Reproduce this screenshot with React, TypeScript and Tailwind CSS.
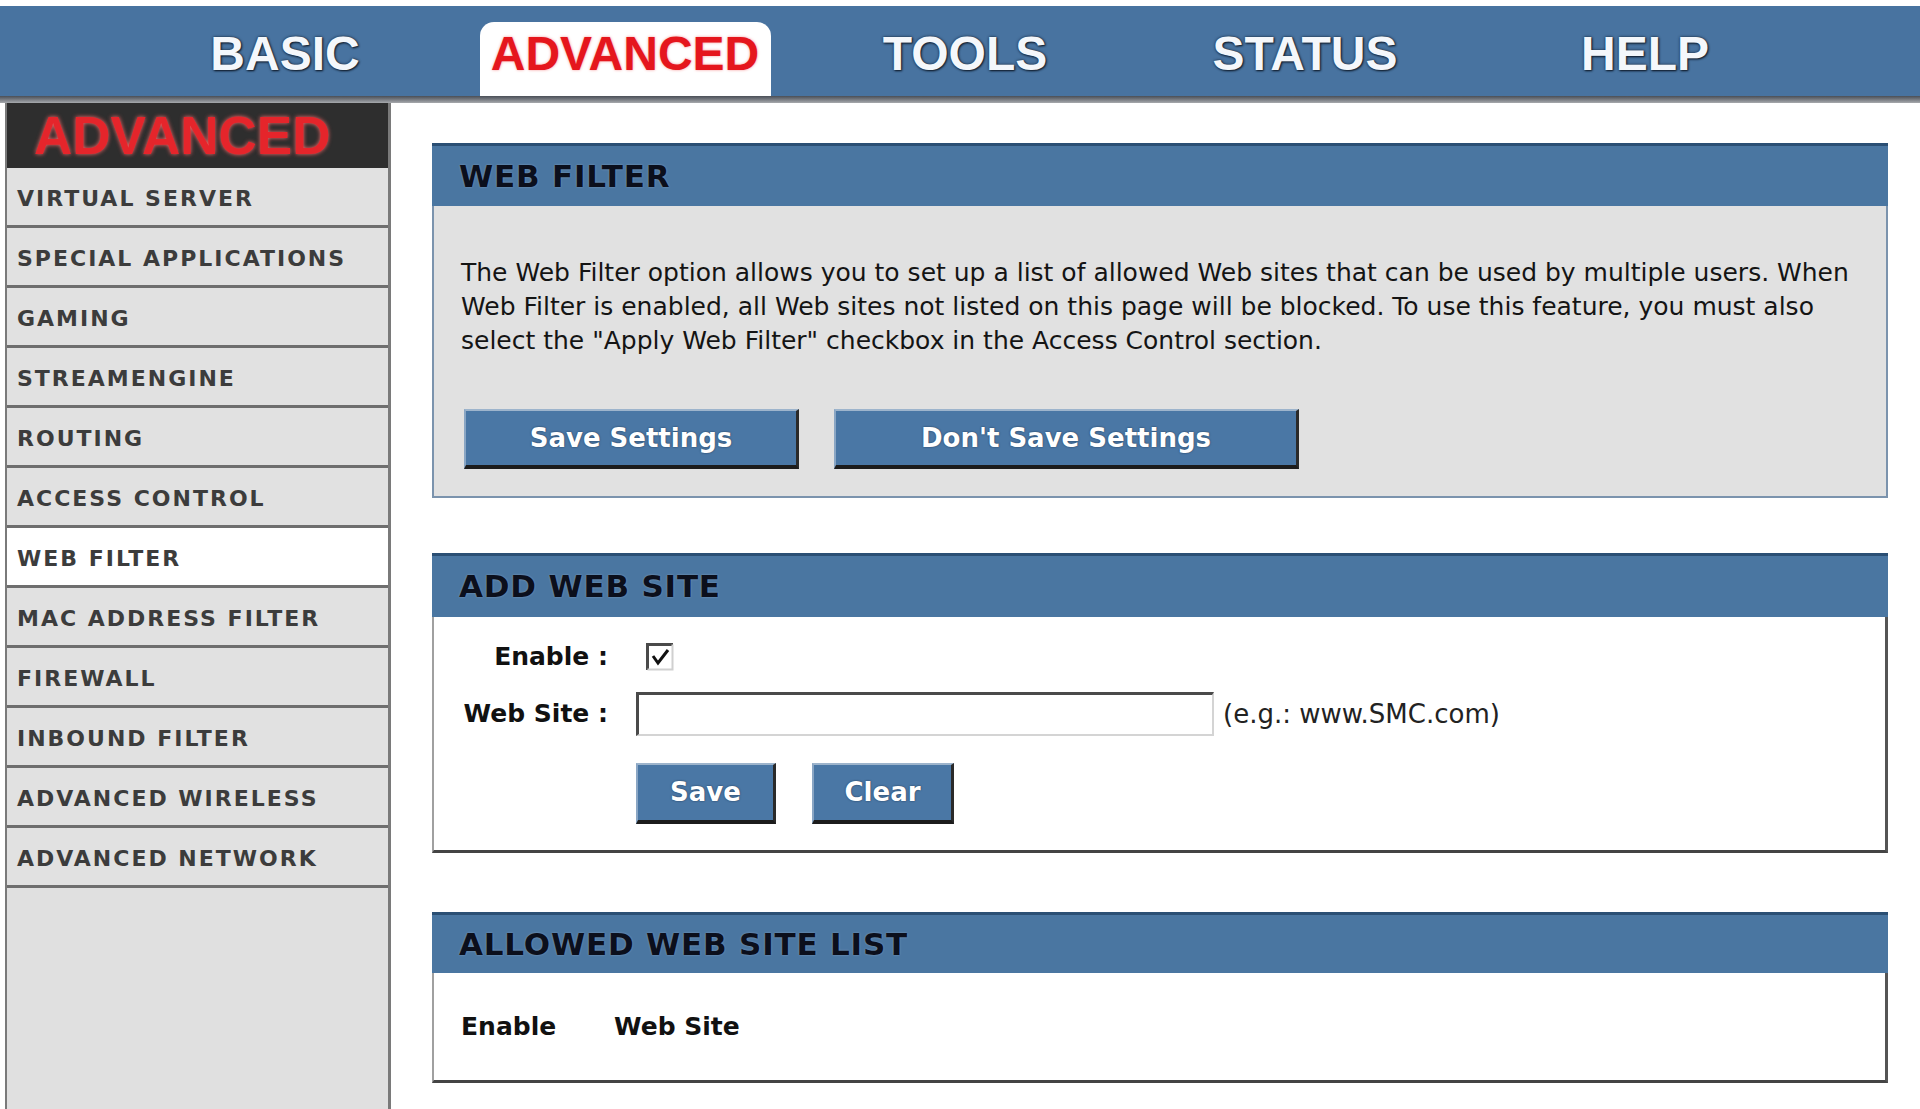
import React from "react";

const tabs = ["BASIC", "ADVANCED", "TOOLS", "STATUS", "HELP"];

const menu = [
  "VIRTUAL SERVER",
  "SPECIAL APPLICATIONS",
  "GAMING",
  "STREAMENGINE",
  "ROUTING",
  "ACCESS CONTROL",
  "WEB FILTER",
  "MAC ADDRESS FILTER",
  "FIREWALL",
  "INBOUND FILTER",
  "ADVANCED WIRELESS",
  "ADVANCED NETWORK",
];

const bodyFont = { fontFamily: '"DejaVu Sans", Verdana, sans-serif' };
const navFont = { fontFamily: '"Liberation Sans", Arial, sans-serif' };

function PanelHeader({ title, height }: { title: string; height: string }) {
  return (
    <div
      className={`${height} flex items-center border-t-[3px] border-[#2b4f74] bg-[#4a76a1] pl-[27px]`}
    >
      <span className="text-[31px] font-bold tracking-[0.8px] text-[#0b0f1c] [text-shadow:0_0_2px_#8aa4c0]">
        {title}
      </span>
    </div>
  );
}

function BlueButton({ label, width }: { label: string; width: string }) {
  return (
    <button
      type="button"
      className={`${width} flex items-center justify-center border-t-2 border-l-2 border-t-[#9db4cc] border-l-[#8aa6c4] border-b-[4px] border-r-[3px] border-b-[#1c1c1c] border-r-[#2a2a2a] bg-[#4a77a5] text-[26px] font-bold text-white [text-shadow:0_0_2px_#1d3550]`}
    >
      {label}
    </button>
  );
}

function CheckBox() {
  return (
    <svg width="28" height="28" viewBox="0 0 28 28">
      <rect x="0" y="0" width="28" height="28" fill="#ffffff" />
      <path d="M1.5 27 V1.5 H27" fill="none" stroke="#4a4a4a" strokeWidth="3" />
      <path d="M1.5 26.5 H26.5 V1.5" fill="none" stroke="#d0d0d0" strokeWidth="2" />
      <path d="M7 13 L12 20 L22 7" fill="none" stroke="#111111" strokeWidth="3" />
    </svg>
  );
}

export default function App() {
  return (
    <div className="flex h-[1109px] w-[1920px] flex-col overflow-hidden bg-white" style={bodyFont}>
      <div className="h-[6px] bg-white" />

      <nav className="flex h-[90px] items-end bg-[#4873a0] pl-[115px]" style={navFont}>
        {tabs.map((tab) =>
          tab === "ADVANCED" ? (
            <div key={tab} className="flex w-[340px] justify-center">
              <div className="flex h-[74px] w-[291px] justify-center rounded-t-[14px] bg-white pt-[4px]">
                <span className="text-[48px] font-bold leading-[56px] text-[#e5161d] [text-shadow:0_0_3px_#f59a9a]">
                  {tab}
                </span>
              </div>
            </div>
          ) : (
            <div key={tab} className="flex h-[74px] w-[340px] justify-center pt-[4px]">
              <span className="text-[48px] font-bold leading-[56px] text-[#f4f7fb] [text-shadow:0_0_3px_#16263a,1px_1px_2px_#0d1826]">
                {tab}
              </span>
            </div>
          )
        )}
      </nav>

      <div className="h-[7px] bg-gradient-to-b from-[#4a4f57] to-[#a7a9ad]" />

      <div className="flex flex-1">
        <aside className="ml-[5px] flex w-[386px] flex-col border-l-2 border-r-[3px] border-[#7a7a7a] bg-[#e0e0e0]">
          <div className="flex h-[65px] items-center bg-[#2e2e2e] pl-[27px]" style={navFont}>
            <span className="text-[53px] font-bold leading-none text-[#e5252b] [text-shadow:0_0_4px_#ff6a6a]">
              ADVANCED
            </span>
          </div>
          {menu.map((item) => (
            <div
              key={item}
              className={`flex h-[60px] items-center border-b-[3px] border-[#6e6e6e] pl-[10px] pt-[3px] ${
                item === "WEB FILTER" ? "bg-white" : "bg-[#e1e1e1]"
              }`}
            >
              <span className="text-[22px] font-bold tracking-[2px] text-[#3c3c3c]">{item}</span>
            </div>
          ))}
          <div className="flex-1 bg-[#e0e0e0]" />
        </aside>

        <main className="flex flex-1 flex-col pl-[41px] pr-[32px] pt-[40px]">
          {/* web filter */}
          <section>
            <PanelHeader title="WEB FILTER" height="h-[63px]" />
            <div className="h-[292px] border-x-2 border-b-2 border-[#7b93ad] bg-[#e1e1e1] pl-[27px] pt-[50px]">
              <p className="whitespace-nowrap text-[25px] leading-[34px] text-[#141414]">
                The Web Filter option allows you to set up a list of allowed Web sites that can be used by multiple users. When
                <br />
                Web Filter is enabled, all Web sites not listed on this page will be blocked. To use this feature, you must also
                <br />
                select the "Apply Web Filter" checkbox in the Access Control section.
              </p>
              <div className="mt-[51px] flex gap-[35px] pl-[3px]">
                <BlueButton label="Save Settings" width="h-[60px] w-[335px]" />
                <BlueButton label="Don't Save Settings" width="h-[60px] w-[465px]" />
              </div>
            </div>
          </section>

          {/* add web site */}
          <section className="mt-[55px]">
            <PanelHeader title="ADD WEB SITE" height="h-[64px]" />
            <div className="h-[236px] border-l-2 border-r-[3px] border-b-[3px] border-l-[#a0a0a0] border-r-[#555555] border-b-[#444444] bg-white pl-[27px] pt-[23px]">
              <div className="flex h-[34px] items-center">
                <span className="w-[147px] text-right text-[25px] font-bold text-[#111]">Enable :</span>
                <div className="ml-[38px]">
                  <CheckBox />
                </div>
              </div>
              <div className="mt-[18px] flex h-[44px] items-center">
                <span className="w-[147px] text-right text-[25px] font-bold text-[#111]">Web Site :</span>
                <input
                  type="text"
                  className="ml-[28px] h-[44px] w-[578px] border-t-[3px] border-l-[3px] border-b-2 border-r-2 border-t-[#4a4a4a] border-l-[#4a4a4a] border-b-[#d4d4d4] border-r-[#d4d4d4] bg-white outline-none"
                />
                <span className="ml-[9px] text-[26px] text-[#222]">(e.g.: www.SMC.com)</span>
              </div>
              <div className="ml-[175px] mt-[27px] flex gap-[36px]">
                <BlueButton label="Save" width="h-[61px] w-[140px]" />
                <BlueButton label="Clear" width="h-[61px] w-[142px]" />
              </div>
            </div>
          </section>

          {/* allowed list */}
          <section className="mt-[59px]">
            <PanelHeader title="ALLOWED WEB SITE LIST" height="h-[61px]" />
            <div className="flex h-[110px] items-center border-l-2 border-r-[3px] border-b-[3px] border-l-[#a0a0a0] border-r-[#555555] border-b-[#444444] bg-white pl-[27px]">
              <span className="w-[153px] text-[25px] font-bold text-[#111]">Enable</span>
              <span className="text-[25px] font-bold text-[#111]">Web Site</span>
            </div>
          </section>
        </main>
      </div>
    </div>
  );
}
